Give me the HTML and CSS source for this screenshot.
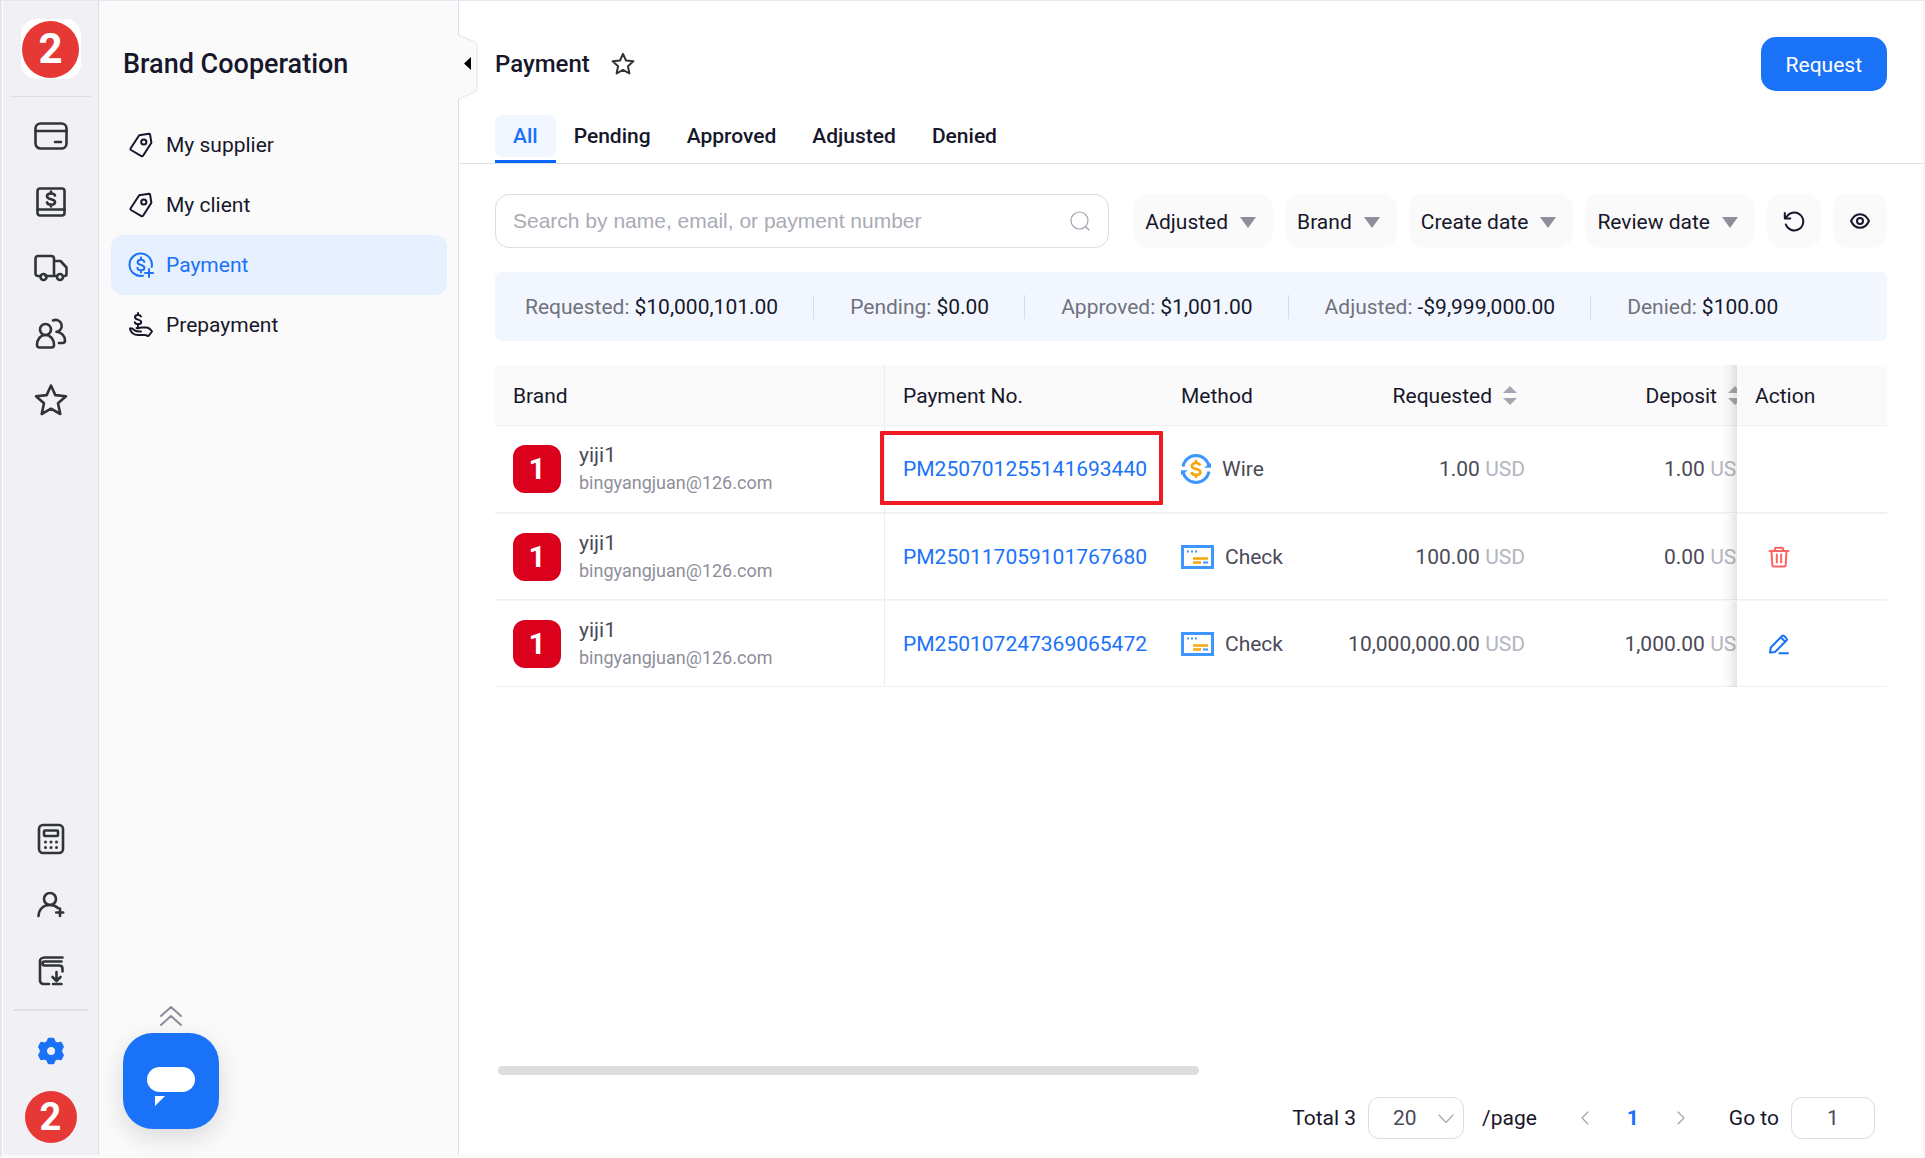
FILE: index.html
```html
<!DOCTYPE html>
<html lang="en">
<head>
<meta charset="utf-8">
<meta name="viewport" content="width=device-width, initial-scale=1">
<title>Payment</title>
<link rel="stylesheet" href="styles.css">
</head>
<body>
<div class="app">
  <nav class="rail" aria-label="Main">
    <a class="rail-logo" href="#"><span class="disc disc-lg">2</span></a>
    <hr class="rail-rule">
    <div class="rail-group">
      <a class="rail-link" href="#" aria-label="Billing"><svg class="icon" viewBox="0 0 36 36"><rect x="2.500" y="5.500" width="31" height="25" rx="5"/><path d="M2.500 13h31M22 24h6"/></svg></a>
      <a class="rail-link" href="#" aria-label="Accounts"><svg class="icon" viewBox="0 0 36 36"><rect x="4.500" y="4.500" width="27" height="27" rx="2.500"/><path d="M4.500 25.500h27"/><path d="M22 11.500c-.5-1.300-2-2-4-2-2.300 0-4 1-4 2.800 0 4 8 1.800 8 5.600 0 1.900-1.800 2.800-4 2.800s-3.600-.8-4-2.300M18 7.500v2M18 20.500v2"/></svg></a>
      <a class="rail-link" href="#" aria-label="Shipping"><svg class="icon" viewBox="0 0 36 36"><path d="M7.500 26H5a2.500 2.500 0 0 1-2.500-2.500v-15A2.500 2.500 0 0 1 5 6h13.500A2.500 2.500 0 0 1 21 8.500V26h-8.500M21 11h6.500l6 6.500V24a2 2 0 0 1-2 2M21 26h2.500"/><circle cx="10.500" cy="27" r="3"/><circle cx="27" cy="27" r="3"/></svg></a>
      <a class="rail-link" href="#" aria-label="Customers"><svg class="icon" viewBox="0 0 36 36"><circle cx="12.500" cy="13.500" r="5.500"/><path d="M6.500 31.500c-1.500 0-2.500-1-2.500-2.500 0-5.500 3.500-10 8.500-10s8.500 4.500 8.500 10c0 1.500-1 2.500-2.500 2.500zM20 4.500a6 6 0 1 1 3.500 11.300c5 .5 8.500 4.200 8.500 8.700 0 1.500-1.200 2.500-2.500 2.500H26"/></svg></a>
      <a class="rail-link" href="#" aria-label="Favorites"><svg class="icon" viewBox="0 0 36 36"><path d="M18 3.500l4.300 9.600 10.700 1.200-8 7 2.300 10.700L18 26.700 8.700 32 11 21.300l-8-7 10.700-1.200z"/></svg></a>
    </div>
    <div class="rail-group rail-bottom">
      <a class="rail-link" href="#" aria-label="Calculator"><svg class="icon" viewBox="0 0 36 36"><rect x="6" y="4" width="24" height="28" rx="4"/><rect x="11" y="9.500" width="14" height="5.500" rx="1"/><path class="dots" d="M12.500 21h0M18 21h0M23.500 21h0M12.500 26.500h0M18 26.500h0M23.500 26.500h0"/></svg></a>
      <a class="rail-link" href="#" aria-label="Add contact"><svg class="icon" viewBox="0 0 36 36"><circle cx="17" cy="12" r="6"/><path d="M5.500 29c.5-7 5-11 11.500-11 3.300 0 6 1 8 3M27 21.500v7.500M23.200 25.500h7"/></svg></a>
      <a class="rail-link" href="#" aria-label="Downloads"><svg class="icon" viewBox="0 0 36 36"><path d="M29.500 4.500h-18C8.500 4.500 7 6.500 7 8v19.500A3.500 3.500 0 0 0 10.500 31H16M28.500 8.500H11.500C9 8.500 9 12.500 11.500 12.500H26c2 0 3.500 1 3.500 3v3M23.500 19v8M19.500 24l4 4 4-4M20 31h8.500"/></svg></a>
    </div>
    <hr class="rail-rule rail-rule-thick">
    <a class="rail-link rail-link-active" href="#" aria-label="Settings"><svg class="icon icon-fill" viewBox="0 0 36 36"><path fill-rule="evenodd" d="M15.500 5.500h5l1.500 3.500 2 1.200 4-.6 2.200 4.200L28.500 17v2l1.700 3.200-2.200 4.200-4-.6-2 1.200-1.500 3.500h-5L14 27l-2-1.200-4 .6-2.200-4.200L7.500 19v-2l-1.700-3.200L8 9.600l4 .6L14 9zM18 13.200a4.800 4.800 0 1 0 0 9.600 4.800 4.800 0 0 0 0-9.600z"/></svg></a>
    <a class="rail-avatar" href="#"><span class="disc">2</span></a>
  </nav>

  <aside class="sidebar">
    <h2 class="sidebar-title">Brand Cooperation</h2>
    <nav class="menu" aria-label="Brand Cooperation">
      <a class="menu-item" href="#"><svg class="menu-icon" viewBox="0 0 24 24"><path d="M10.200 2.300 20 .8a1 1 0 0 1 1.100.8l1.300 8.200-8.300 13a1.200 1.200 0 0 1-1.700.3L2 17a1.200 1.200 0 0 1-.3-1.700z"/><circle cx="14.800" cy="9" r="2.600"/></svg>My supplier</a>
      <a class="menu-item" href="#"><svg class="menu-icon" viewBox="0 0 24 24"><path d="M10.200 2.300 20 .8a1 1 0 0 1 1.100.8l1.300 8.200-8.300 13a1.200 1.200 0 0 1-1.700.3L2 17a1.200 1.200 0 0 1-.3-1.700z"/><circle cx="14.800" cy="9" r="2.600"/></svg>My client</a>
      <a class="menu-item menu-item-active" href="#" aria-current="page"><svg class="menu-icon" viewBox="0 0 24 24"><path d="M22.700 14A11.200 11.200 0 1 0 14 22.700"/><path d="M15.300 9c-.3-1.500-1.600-2.300-3.300-2.300S8.600 7.500 8.600 9.200c0 3.500 6.800 2 6.800 5.500 0 1.700-1.600 2.500-3.400 2.500s-3.300-.9-3.500-2.400M12 4.500v2.200M12 17.200v2.300M20 16v8M16 20h8"/></svg>Payment</a>
      <a class="menu-item" href="#"><svg class="menu-icon" viewBox="0 0 24 24"><path d="M12 3.500c-.4-1.200-1.500-1.600-3-1.600s-3 .8-3 2.300c0 3 6.200 1.800 6.200 4.800 0 1.500-1.500 2.200-3.200 2.200s-3-.7-3.200-2M9 0v2M9 11v2.500M1 15.500c2-.8 3.500 1 5 2.200 1.800 1 4 .8 6 .8M1 16c1 3.500 4 6 8 6h7c2 0 2 1 3.500 1l3.500-4.500c-2-3-4-4-6-4h-5c-2 0-2.500 1.500-4.500.5"/></svg>Prepayment</a>
    </nav>
    <div class="chat">
      <svg class="chat-up" viewBox="0 0 22 22"><path d="M1 11 11 2l10 9M1 20l10-9 10 9"/></svg>
      <button class="chat-button" type="button" aria-label="Open chat"><svg viewBox="0 0 48 40"><rect width="48" height="25" rx="12.500"/><path d="M8 29h10L8 39z"/></svg></button>
    </div>
  </aside>

  <main class="main">
    <button class="collapse" type="button" aria-label="Collapse menu"><svg viewBox="0 0 20 66"><path class="collapse-shape" d="M0 1l17 7q2 1 2 3v44q0 2-2 3L0 65"/><path class="collapse-arrow" d="M13 23v13l-7-6.500z"/></svg></button>
    <header class="header">
      <h1 class="title">Payment</h1>
      <button class="star" type="button" aria-label="Add to favorites"><svg viewBox="0 0 24 24"><path d="M12 1.800l3 6.700 7.400.8-5.500 4.900 1.500 7.300-6.400-3.700-6.400 3.700 1.500-7.300-5.500-4.900 7.400-.8z"/></svg></button>
      <button class="request" type="button">Request</button>
    </header>
    <nav class="tabs" aria-label="Status">
      <a class="tab tab-active" href="#"><span>All</span></a>
      <a class="tab" href="#"><span>Pending</span></a>
      <a class="tab" href="#"><span>Approved</span></a>
      <a class="tab" href="#"><span>Adjusted</span></a>
      <a class="tab" href="#"><span>Denied</span></a>
    </nav>
    <div class="content">
      <div class="toolbar">
        <label class="search"><input type="text" aria-label="Search payments" placeholder="Search by name, email, or payment number"><svg viewBox="0 0 20 20"><circle cx="9.500" cy="9.500" r="8.500"/><path d="M15.500 15.500 19 19"/></svg></label>
        <div class="filters">
          <button class="filter" type="button">Adjusted<span class="caret"></span></button>
          <button class="filter" type="button">Brand<span class="caret"></span></button>
          <button class="filter" type="button">Create date<span class="caret"></span></button>
          <button class="filter" type="button">Review date<span class="caret"></span></button>
          <button class="filter filter-icon" type="button" aria-label="Reset"><svg viewBox="0 0 24 24"><path d="M2.800 4v5.500h5.500M4.200 8.500A9 9 0 1 1 3.800 15.500"/></svg></button>
          <button class="filter filter-icon" type="button" aria-label="Visible columns"><svg viewBox="0 0 24 24"><path d="M3 12c2-4.300 5-6.800 9-6.800s7 2.500 9 6.800c-2 4.300-5 6.800-9 6.800S5 16.300 3 12z"/><circle cx="12" cy="12" r="3"/></svg></button>
        </div>
      </div>
      <dl class="summary">
        <div class="sum"><dt>Requested:</dt><dd>$10,000,101.00</dd></div>
        <div class="sum"><dt>Pending:</dt><dd>$0.00</dd></div>
        <div class="sum"><dt>Approved:</dt><dd>$1,001.00</dd></div>
        <div class="sum"><dt>Adjusted:</dt><dd>-$9,999,000.00</dd></div>
        <div class="sum"><dt>Denied:</dt><dd>$100.00</dd></div>
      </dl>
      <div class="table-wrap">
        <table class="table">
          <colgroup><col class="col-brand"><col class="col-no"><col class="col-method"><col class="col-amount"><col class="col-amount"><col><col class="col-action"></colgroup>
          <thead>
            <tr><th class="brand-cell">Brand</th><th>Payment No.</th><th>Method</th><th class="num">Requested<span class="sort"></span></th><th class="num">Deposit<span class="sort"></span></th><th></th><th class="action">Action</th></tr>
          </thead>
          <tbody>
            <tr>
              <td class="brand-cell"><div class="brand"><span class="badge">1</span><div class="brand-text"><div class="brand-name">yiji1</div><div class="brand-mail">bingyangjuan@126.com</div></div></div></td>
              <td class="marked"><a class="pay-link" href="#">PM250701255141693440</a></td>
              <td><div class="method"><svg class="wire" viewBox="0 0 30 30"><path d="M2 12.500A13.200 13.200 0 0 1 28 12.500M28 17.500A13.200 13.200 0 0 1 2 17.500"/><path class="wire-tip" d="M23 13.800h7V9zM7 16.200H0V21z"/><path class="gold" d="M19.200 11.500c-.5-1.700-2-2.500-4.200-2.500s-4.200 1-4.200 2.900c0 4 8.600 2 8.600 6 0 2-2.200 3-4.400 3s-4.200-1-4.400-2.900M15 6v3M15 21v3"/></svg>Wire</div></td>
              <td class="num">1.00 <span class="cur">USD</span></td><td class="num">1.00 <span class="cur">USD</span></td><td></td>
              <td class="action"></td>
            </tr>
            <tr>
              <td class="brand-cell"><div class="brand"><span class="badge">1</span><div class="brand-text"><div class="brand-name">yiji1</div><div class="brand-mail">bingyangjuan@126.com</div></div></div></td>
              <td><a class="pay-link" href="#">PM250117059101767680</a></td>
              <td><div class="method"><svg class="check" viewBox="0 0 33 24"><rect x="1.500" y="1.500" width="30" height="21"/><path class="dash" d="M6 6.500h2M10 6.500h2M14 6.500h2"/><path class="gold" d="M12 13.500h15M12 17.500h8"/><path class="dash" d="M22 17.500h5"/></svg>Check</div></td>
              <td class="num">100.00 <span class="cur">USD</span></td><td class="num">0.00 <span class="cur">USD</span></td><td></td>
              <td class="action"><button class="act act-delete" type="button" aria-label="Delete"><svg viewBox="0 0 24 24"><path d="M2.500 6h19M8 6V3.700a1 1 0 0 1 1-1h6a1 1 0 0 1 1 1V6M4.500 6l.8 14A1.500 1.500 0 0 0 6.800 21.500h10.400a1.500 1.500 0 0 0 1.500-1.500l.8-14M9.800 9.500v8M14.200 9.500v8"/></svg></button></td>
            </tr>
            <tr>
              <td class="brand-cell"><div class="brand"><span class="badge">1</span><div class="brand-text"><div class="brand-name">yiji1</div><div class="brand-mail">bingyangjuan@126.com</div></div></div></td>
              <td><a class="pay-link" href="#">PM250107247369065472</a></td>
              <td><div class="method"><svg class="check" viewBox="0 0 33 24"><rect x="1.500" y="1.500" width="30" height="21"/><path class="dash" d="M6 6.500h2M10 6.500h2M14 6.500h2"/><path class="gold" d="M12 13.500h15M12 17.500h8"/><path class="dash" d="M22 17.500h5"/></svg>Check</div></td>
              <td class="num">10,000,000.00 <span class="cur">USD</span></td><td class="num">1,000.00 <span class="cur">USD</span></td><td></td>
              <td class="action"><button class="act act-edit" type="button" aria-label="Edit"><svg viewBox="0 0 24 24"><path d="M3 20.500l.8-5L15 4a1.500 1.500 0 0 1 2.100 0L19.500 6.400a1.500 1.500 0 0 1 0 2.100L8 20zM14 5.500l4 4M12.500 21.200H21"/></svg></button></td>
            </tr>
          </tbody>
        </table>
      </div>
      <div class="scroll-track"><div class="scroll-thumb"></div></div>
      <footer class="pager">
        <span>Total 3</span>
        <span class="select-box"><select aria-label="Rows per page"><option>20</option></select><svg viewBox="0 0 16 10"><path d="M1 1l7 7.500L15 1"/></svg></span>
        <span class="per-page">/page</span>
        <button class="page-btn" type="button" aria-label="Previous page"><svg viewBox="0 0 8 14"><path d="M7 1 1 7l6 6"/></svg></button>
        <button class="page-btn page-current" type="button">1</button>
        <button class="page-btn" type="button" aria-label="Next page"><svg viewBox="0 0 8 14"><path d="M1 1l6 6-6 6"/></svg></button>
        <label class="goto">Go to<input type="text" value="1"></label>
      </footer>
    </div>
  </main>
</div>
</body>
</html>
```
FILE: styles.css
```css
* { box-sizing: border-box; }

body {
  margin: 0;
  font: 21px/30px Roboto, "Liberation Sans", sans-serif;
  color: #17172b;
  background: #fff;
}

a { color: inherit; text-decoration: none; }
button, input, select { font: inherit; color: inherit; }
button { border: 0; padding: 0; background: none; cursor: pointer; }
svg { display: block; flex: none; fill: none; stroke: currentColor; stroke-linecap: round; stroke-linejoin: round; }

.app {
  display: flex;
  min-height: 100vh;
  border: solid #e2e7f2;
  border-width: 1px 2px 3px;
  border-right-color: #f7f7fb;
  border-bottom-color: #fafafa;
}

/* icon rail */
.rail {
  flex: none;
  display: flex;
  flex-direction: column;
  align-items: center;
  width: 97px;
  padding: 18px 0 12px;
  background: #f0f0f5;
  border-left: 1px solid #fff;
  border-right: 1px solid #dfdfea;
}
.rail-logo {
  display: grid;
  place-items: center;
  width: 60px;
  height: 60px;
  border-radius: 15px;
  background: #fff;
}
.disc {
  display: grid;
  place-items: center;
  width: 52px;
  height: 52px;
  border-radius: 50%;
  background: #e63935;
  color: #fff;
  font-family: "Liberation Sans Narrow", Roboto, sans-serif;
  font-size: 38px;
  font-weight: 700;
}
.disc-lg { width: 57px; height: 57px; font-size: 42px; }
.rail-rule { width: 81px; height: 1px; margin: 17px 0 6px; border: 0; background: #dfdfea; }
.rail-rule-thick { width: 74px; height: 2px; margin: 5px 0 7px; }
.rail-group { display: flex; flex-direction: column; }
.rail-bottom { margin-top: auto; }
.rail-link { display: grid; place-items: center; width: 66px; height: 66px; color: #303438; }
.rail-link-active { color: #1a72f8; }
.icon { width: 36px; height: 36px; stroke-width: 2.6; }
.icon .dots { stroke-width: 3; }
.icon-fill { fill: currentColor; stroke-width: 1.5; }
.rail-avatar { border-radius: 50%; margin-top: 7px; }

/* sidebar */
.sidebar {
  position: relative;
  flex: none;
  width: 360px;
  padding: 45px 11px 0 12px;
  background: #fafafa;
  border-right: 1px solid #dfdfea;
}
.sidebar-title { margin: 0 0 33px 12px; font-size: 27px; font-weight: 500; line-height: 36px; }
.menu-item {
  display: flex;
  align-items: center;
  gap: 13px;
  height: 60px;
  padding: 0 18px;
  border-radius: 12px;
}
.menu-item-active { color: #1a72f8; background: #e6f0fe; }
.menu-icon { width: 24px; height: 24px; stroke-width: 2; overflow: visible; }
.chat {
  position: absolute;
  left: 24px;
  bottom: 26px;
  display: flex;
  flex-direction: column;
  align-items: center;
  gap: 6px;
}
.chat-up { width: 22px; height: 22px; stroke: #8d8b9c; stroke-width: 2; }
.chat-button {
  display: grid;
  place-items: center;
  width: 96px;
  height: 96px;
  padding-top: 12px;
  border-radius: 30px;
  background: #1a72f8;
  box-shadow: 0 8px 24px rgba(20, 20, 50, 0.14);
}
.chat-button svg { width: 48px; height: 40px; fill: #fff; stroke: none; }

/* main column */
.main { position: relative; flex: 1; min-width: 0; display: flex; flex-direction: column; }
.collapse { position: absolute; left: -1px; top: 33px; }
.collapse svg { width: 20px; height: 66px; }
.collapse-shape { fill: #fafafa; stroke: #e3e3ec; }
.collapse-arrow { fill: #000; stroke: none; }

.header { display: flex; align-items: center; padding: 36px 36px 0; }
.title { margin: 0; font-size: 24px; font-weight: 500; line-height: 36px; }
.star { margin-left: 21px; color: #303438; }
.star svg { width: 24px; height: 24px; stroke-width: 2; }
.request {
  height: 54px;
  margin-left: auto;
  padding: 2px 25px 0;
  border-radius: 15px;
  background: #1a72f8;
  color: #fff;
}

.tabs { display: flex; padding: 24px 36px 0; border-bottom: 1px solid #dfe0e4; font-weight: 500; }
.tab { padding-bottom: 3px; border-bottom: 3px solid transparent; }
.tab span { display: block; padding: 6px 18px; border-radius: 8px; }
.tab-active { color: #1a72f8; border-color: #0a66ff; }
.tab-active span { background: #f2f7ff; }

.content { flex: 1; display: flex; flex-direction: column; padding: 30px 36px 16px; }
.toolbar { display: flex; gap: 24px; }
.search {
  flex: 1;
  display: flex;
  align-items: center;
  height: 54px;
  padding: 0 18px 0 17px;
  border: 1px solid #dcdde6;
  border-radius: 14px;
}
.search input {
  flex: 1;
  min-width: 0;
  padding: 0;
  border: 0;
  outline: 0;
  background: none;
  font-family: "Liberation Sans", Arial, sans-serif;
}
.search input::placeholder { color: #a9abb5; opacity: 1; }
.search svg { width: 20px; height: 20px; color: #a0a3ad; stroke-width: 1.2; }
.filters { display: flex; gap: 12px; }
.filter {
  display: flex;
  align-items: center;
  gap: 12px;
  height: 54px;
  padding: 2px 17px 0 12px;
  border-radius: 15px;
  background: #fafafa;
}
.caret { border: solid transparent; border-width: 11px 8px 0; border-top-color: #8f8e9b; }
.filter-icon { justify-content: center; width: 54px; padding: 0; }
.filter-icon svg { width: 24px; height: 24px; stroke-width: 2; }

.summary {
  display: flex;
  align-items: center;
  margin: 24px 0;
  min-height: 69px;
  padding: 0 30px;
  border-radius: 6px;
  background: #f2f7ff;
}
.sum { display: flex; gap: 5px; line-height: 24px; white-space: nowrap; }
.sum + .sum { margin-left: 35px; padding-left: 36px; border-left: 1px solid #d8dce8; }
.sum dt { color: #71717c; }
.sum dd { margin: 0; }

/* payments table */
.table-wrap { flex: 1; overflow-x: auto; scrollbar-width: none; }
.table { width: 198%; table-layout: fixed; border-collapse: separate; border-spacing: 0; color: #4a4a58; }
.col-brand { width: 390px; }
.col-no { width: 278px; }
.col-method { width: 155px; }
.col-amount { width: 225px; }
.col-action { width: 150px; }
.table th, .table td { padding: 0 18px; border-bottom: 1px solid #f0f0f3; text-align: left; white-space: nowrap; }
.table th { height: 61px; padding-top: 2px; background: #fafafa; color: #17172b; font-weight: 400; }
.table td { height: 87px; background: #fff; }
.table tr + tr td { border-top: 1px solid #f5f5f7; }
.table .brand-cell { border-right: 1px solid #ececf2; }
.table .num { text-align: right; }
.cur { color: #b5b5bf; }
.table .action { position: sticky; right: 0; }
.table .action::before {
  content: "";
  position: absolute;
  top: 0;
  bottom: -1px;
  left: -15px;
  width: 15px;
  background: linear-gradient(to left, rgba(0, 0, 0, 0.1), rgba(0, 0, 0, 0.03) 50%, transparent);
}
.sort {
  display: inline-flex;
  flex-direction: column;
  gap: 5px;
  margin: 0 8px 0 11px;
  padding-bottom: 3px;
  vertical-align: middle;
}
.sort::before, .sort::after { content: ""; border: solid transparent; }
.sort::before { border-width: 0 7px 7px; border-bottom-color: #a6a6b0; }
.sort::after { border-width: 7px 7px 0; border-top-color: #a6a6b0; }
.brand { display: flex; align-items: center; gap: 18px; }
.badge {
  display: grid;
  place-items: center;
  width: 48px;
  height: 48px;
  border-radius: 12px;
  background: #db001b;
  color: #fff;
  font-size: 30px;
  font-weight: 700;
}
.brand-text { padding-bottom: 2px; }
.brand-name { line-height: 30px; }
.brand-mail { font-size: 18px; line-height: 26px; color: #8f8e9b; }
.pay-link { color: #1a72f8; }
.marked { position: relative; }
.marked::after {
  content: "";
  position: absolute;
  inset: 5px 0 7px -5px;
  border: 4px solid #f01c24;
  border-radius: 1px;
  pointer-events: none;
}
.method { display: flex; align-items: center; gap: 11px; }
.wire { width: 30px; height: 30px; stroke: #3c96fb; stroke-width: 3; stroke-linecap: butt; }
.wire-tip { fill: #3c96fb; stroke: none; }
.check { width: 33px; height: 24px; stroke: #3c96fb; stroke-width: 3; stroke-linecap: butt; stroke-linejoin: miter; }
.dash { stroke-width: 2; }
.gold { stroke: #f7a50a; stroke-width: 2.6; }
.act { display: block; margin-left: 12px; }
.act svg { width: 24px; height: 24px; stroke-width: 2; }
.act-delete { color: #fa6464; }
.act-edit { color: #1a72f8; }

.scroll-track { padding: 0 3px; margin: 24px 0 22px; }
.scroll-thumb { width: 50.6%; height: 9px; border-radius: 5px; background: #dcdddf; }

.pager { display: flex; align-items: center; justify-content: flex-end; padding-right: 12px; }
.select-box { position: relative; margin: 0 18px 0 12px; }
.select-box select, .goto input { height: 42px; border: 1px solid #dcdde6; border-radius: 11px; background: #fff; color: #4a4a58; }
.select-box select { display: block; width: 96px; padding: 0 0 0 24px; appearance: none; }
.select-box svg { position: absolute; right: 10px; top: 17px; width: 16px; height: 10px; color: #a6a6b0; stroke-width: 1.2; pointer-events: none; }
.per-page { margin-right: 24px; }
.page-btn { display: grid; place-items: center; width: 48px; height: 42px; color: #a0a3ad; }
.page-btn svg { width: 8px; height: 14px; stroke-width: 1.2; }
.page-current { color: #1a72f8; font-weight: 700; }
.goto { display: flex; align-items: center; gap: 12px; margin-left: 24px; }
.goto input { width: 84px; padding: 0; text-align: center; }
```
